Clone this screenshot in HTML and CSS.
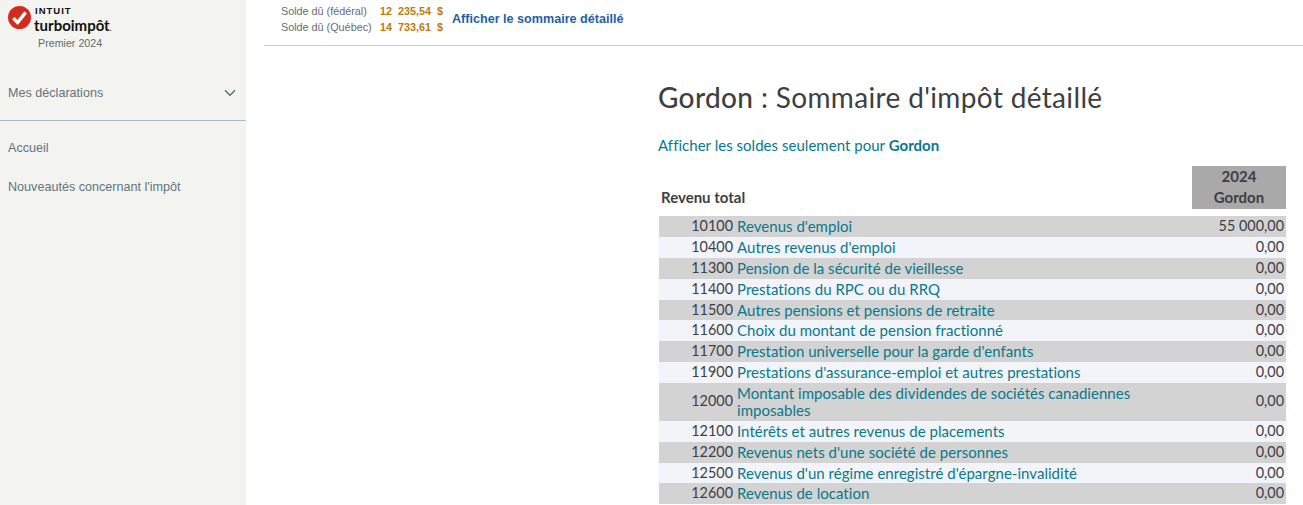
FILE: index.html
```html
<!DOCTYPE html>
<html lang="fr">
<head>
<meta charset="utf-8">
<title>Sommaire d'impôt détaillé</title>
<link rel="stylesheet" href="styles.css">
</head>
<body>
<div class="app">
  <aside class="sidebar">
    <div class="brand">
      <svg class="check" viewBox="0 0 24 24" width="23" height="23" aria-hidden="true">
        <circle cx="12" cy="12" r="12" fill="#d52b1e"/>
        <path d="M5.6 12.6l4.4 4.6L18.4 6.6" fill="none" stroke="#fff" stroke-width="3.6"/>
      </svg>
      <div class="wordmark">
        <span class="intuit">INTUIT</span>
        <span class="turbo">turboimpôt<small>.</small></span>
      </div>
    </div>
    <div class="edition">Premier 2024</div>
    <div class="nav-group">
      <span>Mes déclarations</span>
      <svg viewBox="0 0 12 8" width="12" height="8" aria-hidden="true"><path d="M1 1.2l5 5 5-5" fill="none" stroke="#5f6871" stroke-width="1.4"/></svg>
    </div>
    <nav class="nav">
      <a>Accueil</a>
      <a>Nouveautés concernant l'impôt</a>
    </nav>
  </aside>
  <div class="main">
    <header class="topbar">
      <div class="balances">
        <div class="bal-row"><span class="bal-label">Solde dû (fédéral)</span><span class="bal-val">12&nbsp; 235,54&nbsp; $</span></div>
        <div class="bal-row"><span class="bal-label">Solde dû (Québec)</span><span class="bal-val">14&nbsp; 733,61&nbsp; $</span></div>
      </div>
      <a class="summary-link">Afficher le sommaire détaillé</a>
    </header>
    <section class="content">
      <h1><b>Gordon</b> : Sommaire d'impôt détaillé</h1>
      <p class="only"><a>Afficher les soldes seulement pour <b>Gordon</b></a></p>
      <table class="tax">
        <colgroup>
          <col class="col-code">
          <col class="col-label">
          <col class="col-val">
        </colgroup>
        <thead>
          <tr>
            <th class="section" colspan="2">Revenu total</th>
            <th class="year">2024<br>Gordon</th>
          </tr>
        </thead>
        <tbody>
          <tr class="gap"><td colspan="3"></td></tr>
          <tr><td class="code">10100</td><td class="label">Revenus d'emploi</td><td class="val">55 000,00</td></tr>
          <tr><td class="code">10400</td><td class="label">Autres revenus d'emploi</td><td class="val">0,00</td></tr>
          <tr><td class="code">11300</td><td class="label">Pension de la sécurité de vieillesse</td><td class="val">0,00</td></tr>
          <tr><td class="code">11400</td><td class="label">Prestations du RPC ou du RRQ</td><td class="val">0,00</td></tr>
          <tr><td class="code">11500</td><td class="label">Autres pensions et pensions de retraite</td><td class="val">0,00</td></tr>
          <tr><td class="code">11600</td><td class="label">Choix du montant de pension fractionné</td><td class="val">0,00</td></tr>
          <tr><td class="code">11700</td><td class="label">Prestation universelle pour la garde d'enfants</td><td class="val">0,00</td></tr>
          <tr><td class="code">11900</td><td class="label">Prestations d'assurance-emploi et autres prestations</td><td class="val">0,00</td></tr>
          <tr><td class="code">12000</td><td class="label">Montant imposable des dividendes de sociétés canadiennes imposables</td><td class="val">0,00</td></tr>
          <tr><td class="code">12100</td><td class="label">Intérêts et autres revenus de placements</td><td class="val">0,00</td></tr>
          <tr><td class="code">12200</td><td class="label">Revenus nets d'une société de personnes</td><td class="val">0,00</td></tr>
          <tr><td class="code">12500</td><td class="label">Revenus d'un régime enregistré d'épargne-invalidité</td><td class="val">0,00</td></tr>
          <tr><td class="code">12600</td><td class="label">Revenus de location</td><td class="val">0,00</td></tr>
        </tbody>
      </table>
    </section>
  </div>
</div>
</body>
</html>
```
FILE: styles.css
```css
* { box-sizing: border-box; }
html, body { margin: 0; height: 100%; overflow: hidden; background: #fff; }
body { font-family: "Liberation Sans", Arial, sans-serif; }
.app { display: flex; height: 505px; }
.sidebar { width: 246px; flex: none; background: #f3f4ef; }
.brand { display: flex; align-items: flex-start; gap: 3px; padding: 6px 0 0 8px; }
.check { display: block; }
.wordmark { display: flex; flex-direction: column; color: #111; }
.intuit { font: 700 9.5px/10px "Liberation Sans", sans-serif; letter-spacing: 1px; margin-left: 1px; }
.turbo { font: 700 15px/18px Lato, sans-serif; }
.turbo small { font-size: 7px; }
.edition { font-size: 10.7px; line-height: 12px; color: #5d6a75; padding: 0 0 0 38px; }
.nav-group { display: flex; justify-content: space-between; align-items: center; height: 72px; padding: 16px 10px 0 8px; font-size: 12.6px; color: #66727f; border-bottom: 1px solid #a9bcc3; }
.nav { display: flex; flex-direction: column; gap: 25px; padding: 20px 0 0 8px; font-size: 12.6px; line-height: 14px; color: #66727f; }
.main { flex: 1; min-width: 0; padding-left: 18px; }
.topbar { display: flex; align-items: center; height: 46px; border-bottom: 1px solid #c5ced4; padding: 0 0 7px 17px; }
.balances { display: flex; flex-direction: column; gap: 3px; font-size: 10.8px; line-height: 13px; }
.bal-row { display: flex; }
.bal-label { width: 99px; color: #666c72; }
.bal-val { font-weight: 700; color: #bd7b0c; width: 72px; }
.summary-link { font-size: 12.6px; font-weight: 700; color: #1f5fa8; }
.content { padding: 0 17px 0 394px; font-family: Lato, sans-serif; }
h1 { margin: 35px 0 0; font-size: 28px; line-height: 32px; font-weight: 400; color: #3d3f42; letter-spacing: .35px; }
h1 b { font-weight: 500; }
.only { margin: 23px 0 0; font-size: 15px; line-height: 18px; color: #08798b; letter-spacing: .03px; }
.only b { font-weight: 700; }
.tax { margin-top: 12px; width: 627px; margin-left: 1px; border-collapse: collapse; table-layout: fixed; font-size: 15px; line-height: 16.875px; color: #3d4046; }
.col-code { width: 78px; }
.col-val { width: 94px; }
.tax th { padding: 0; font-weight: 700; color: #3d3f42; }
.tax th.section { text-align: left; vertical-align: bottom; padding: 0 0 3px 2px; }
.tax th.year { height: 43px; padding-bottom: 1px; background: #a9a9a9; line-height: 21px; }
.tax .gap td { height: 7px; padding: 0; background: #fff; }
.tax td { padding: 2px 0; }
tbody tr:nth-child(even) td { background: #d3d3d3; }
tbody tr:nth-child(odd) td { background: #f3f4f9; }
.tax td.code { text-align: right; padding-right: 4px; font-size: 14.4px; }
.tax td.label { color: #08798b; padding-right: 20px; letter-spacing: .03px; }
.tax td.val { text-align: right; padding-right: 2px; font-size: 14.4px; }
```
